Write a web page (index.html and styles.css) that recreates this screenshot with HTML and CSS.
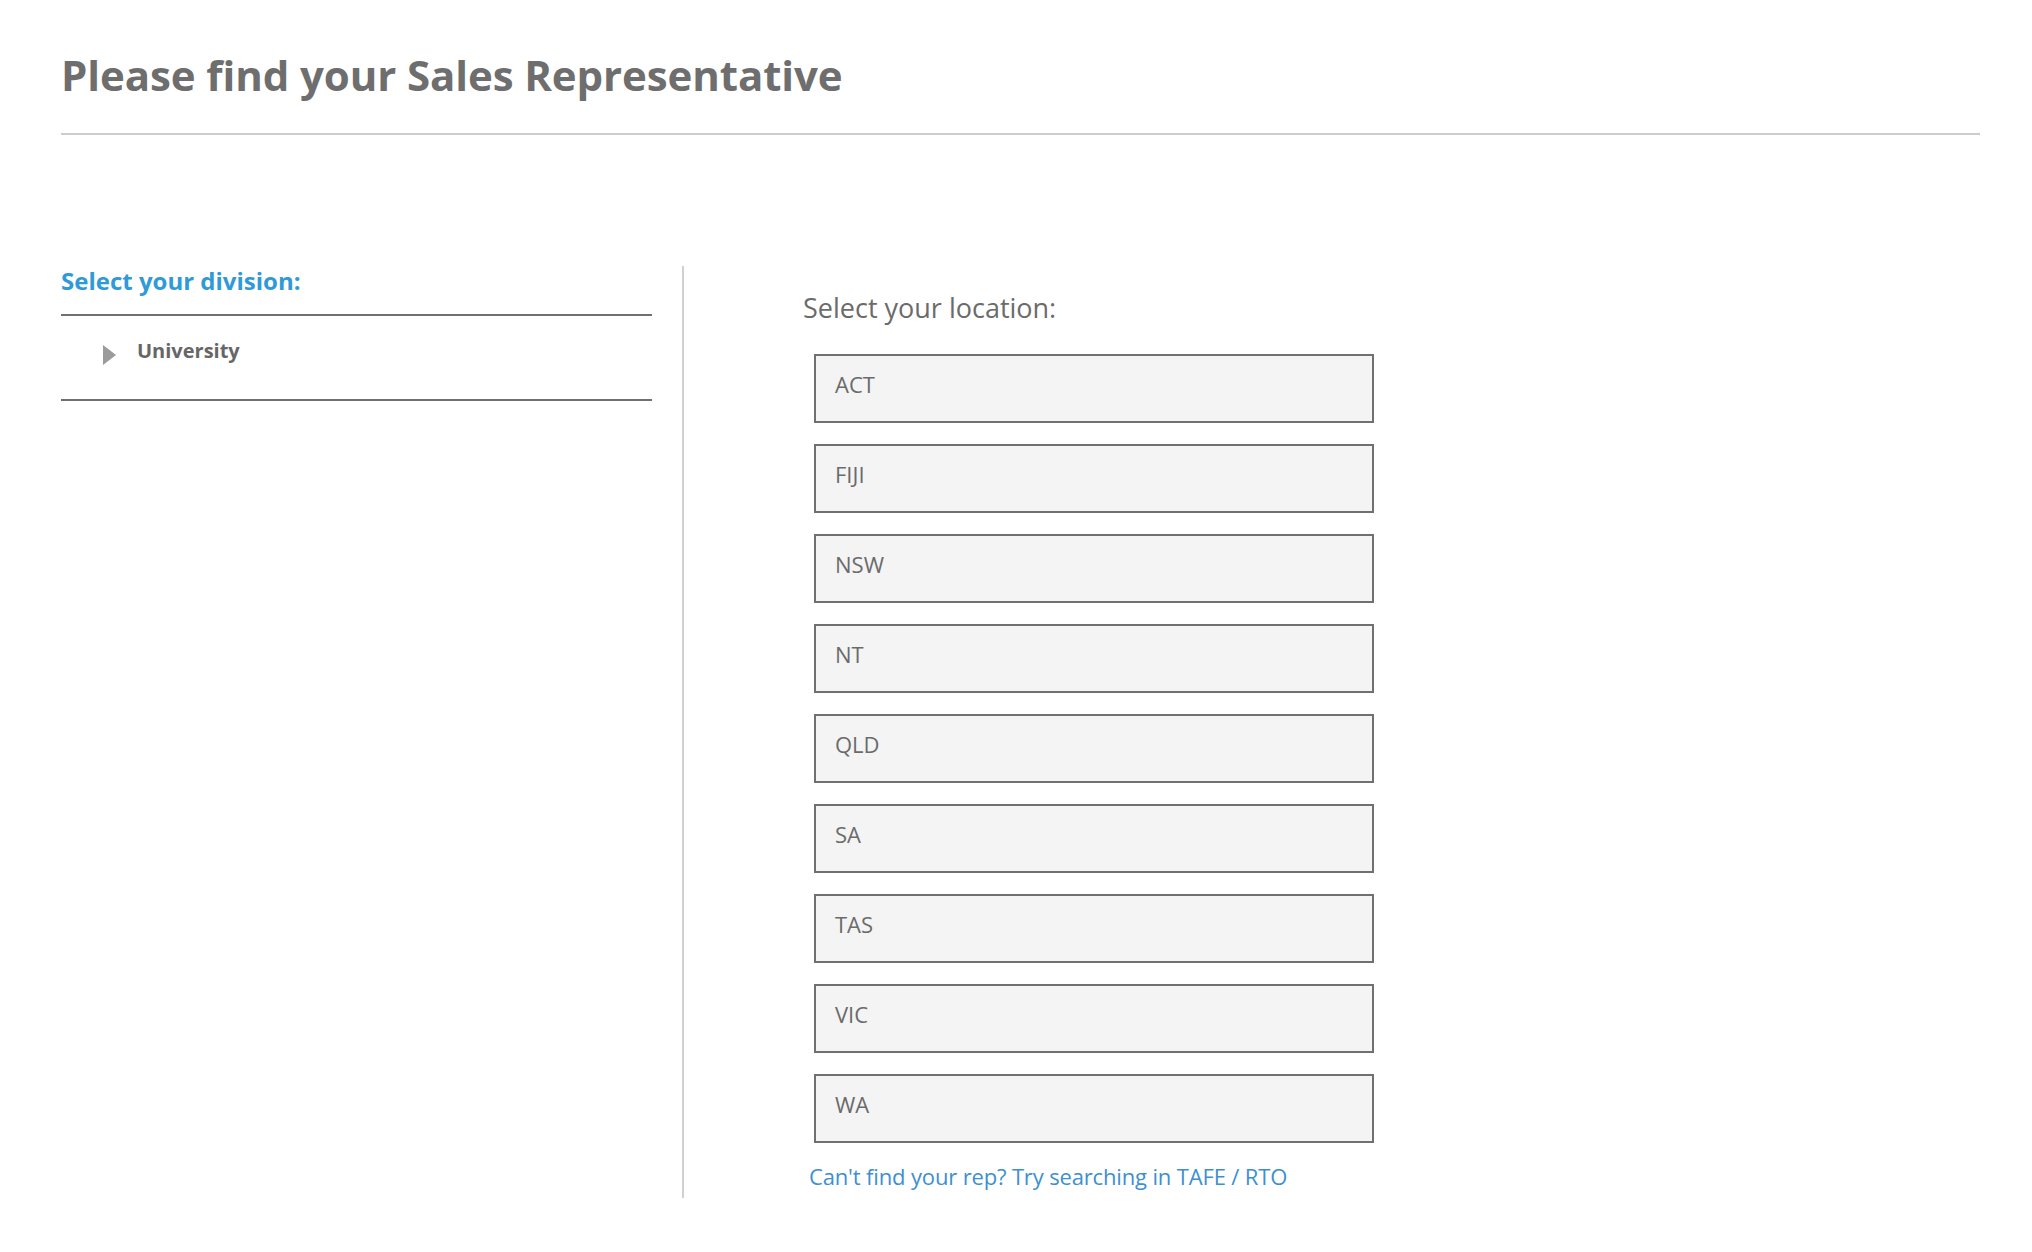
FILE: index.html
```html
<!DOCTYPE html>
<html lang="en">
<head>
<meta charset="utf-8">
<title>Please find your Sales Representative</title>
<link rel="stylesheet" href="styles.css">
</head>
<body>
<div class="page">
  <header class="page-header">
    <h1 class="page-title">Please find your Sales Representative</h1>
  </header>
  <div class="finder">
    <aside class="division">
      <h2 class="division-title">Select your division:</h2>
      <ul class="division-list">
        <li class="division-item">
          <svg class="caret" width="13" height="20" viewBox="0 0 13 20" aria-hidden="true"><polygon points="0,0 13,10 0,20" fill="#9b9b9b"/></svg>
          <span>University</span>
        </li>
      </ul>
    </aside>
    <section class="location">
      <h2 class="location-title">Select your location:</h2>
      <ul class="location-list">
        <li class="location-item">ACT</li>
        <li class="location-item">FIJI</li>
        <li class="location-item">NSW</li>
        <li class="location-item">NT</li>
        <li class="location-item">QLD</li>
        <li class="location-item">SA</li>
        <li class="location-item">TAS</li>
        <li class="location-item">VIC</li>
        <li class="location-item">WA</li>
      </ul>
      <a class="alt-link" href="#">Can't find your rep? Try searching in TAFE / RTO</a>
    </section>
  </div>
</div>
</body>
</html>
```

FILE: styles.css
```css
* { box-sizing: border-box; }

html, body {
  margin: 0;
  padding: 0;
  background: #ffffff;
}

body {
  font-family: "Open Sans", "Noto Sans", "Liberation Sans", sans-serif;
  color: #6d6d6d;
}

.page {
  padding: 0 52px 0 61px;
}

.page-header {
  padding-top: 50px;
  padding-bottom: 33px;
  border-bottom: 2px solid #cccccc;
}

.page-title {
  margin: 0;
  font-size: 42px;
  line-height: 50px;
  font-weight: 700;
  color: #6e6e6e;
  letter-spacing: -0.1px;
}

.finder {
  display: flex;
  align-items: flex-start;
  margin-top: 131px;
}

.division {
  width: 591px;
  flex: none;
}

.division-title {
  margin: 0;
  padding-bottom: 18px;
  font-size: 24px;
  line-height: 30px;
  font-weight: 700;
  color: #2f9ad7;
  border-bottom: 2px solid #707070;
}

.division-list {
  list-style: none;
  margin: 0;
  padding: 21px 0 34px 42px;
  border-bottom: 2px solid #707070;
}

.division-item {
  display: flex;
  align-items: center;
  gap: 21px;
  font-size: 20px;
  line-height: 24px;
  font-weight: 700;
  color: #666666;
}

.caret {
  display: block;
  flex: none;
  margin-top: 8px;
}

.location {
  margin-left: 30px;
  border-left: 2px solid #d0d0d0;
  padding: 25px 0 9px 119px;
  flex: 1;
}

.location-title {
  margin: 0;
  font-size: 27px;
  line-height: 34px;
  font-weight: 400;
  color: #6b6b6b;
}

.location-list {
  list-style: none;
  margin: 29px 0 0 11px;
  padding: 0;
  display: flex;
  flex-direction: column;
  gap: 21px;
  width: 560px;
}

.location-item {
  height: 69px;
  padding: 15px 19px 0;
  font-size: 22px;
  line-height: 26px;
  color: #6b6b6b;
  background: #f4f4f4;
  border: 2px solid #707070;
}

.alt-link {
  display: block;
  margin: 20px 0 0 6px;
  font-size: 22px;
  line-height: 26px;
  color: #3d8fd1;
  text-decoration: none;
  letter-spacing: -0.15px;
}
```
